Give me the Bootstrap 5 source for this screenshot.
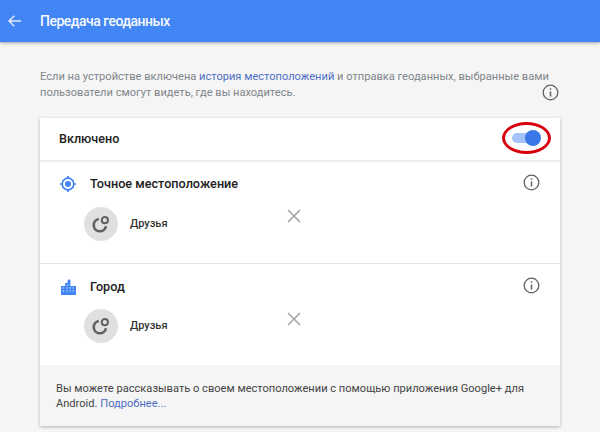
<!DOCTYPE html>
<html lang="ru">
<head>
  <meta charset="UTF-8" />
  <meta name="viewport" content="width=device-width, initial-scale=1.0" />
  <title>Передача геоданных</title>
  <link href="https://cdn.jsdelivr.net/npm/bootstrap@5.3.3/dist/css/bootstrap.min.css" rel="stylesheet">
  <style>
    body {
      background: #f5f5f5;
      font-family: Roboto, "Liberation Sans", sans-serif;
      font-size: 12px;
      overflow: hidden;
      height: 432px;
    }
    #top-bar {
      height: 42px;
      background: #4285f4;
      box-shadow: 0 1px 3px rgba(0, 0, 0, .35);
      color: #fff;
      padding-left: 7px;
    }
    #top-bar h1 {
      font-size: 14px;
      font-weight: 500;
      letter-spacing: -.5px;
      margin: 0 0 0 17px;
      color: #f4f8ff;
    }
    #intro {
      padding: 27px 40px 0;
      height: 76px;
      color: #80868b;
      font-size: 11.1px;
    }
    #intro .info-ico { margin: -1px 1px 0 auto; }
    .info-line { height: 16px; line-height: 16px; white-space: nowrap; }
    .blue-link { color: #4f6fc4; text-decoration: none; }
    #geo-card {
      width: 520px;
      margin: 0 40px;
      background: #fff;
      box-shadow: 0 1px 3px rgba(0, 0, 0, .28);
    }
    #on-row {
      height: 44px;
      padding: 0 8px 0 19px;
      border-bottom: 2px solid #eee;
    }
    #on-row span { font-size: 12.6px; font-weight: 500; color: #212121; }
    #toggle-wrap { position: relative; width: 50px; height: 34px; }
    #toggle-track {
      position: absolute; left: 10px; top: 11px;
      width: 26px; height: 10px;
      border-radius: 6px;
      background: #a3c2f9;
    }
    #toggle-knob {
      position: absolute; left: 23px; top: 8px;
      width: 16px; height: 16px;
      border-radius: 50%;
      background: #3b78e7;
    }
    #toggle-ring {
      position: absolute; left: 0; top: 0;
      width: 49px; height: 32px;
      border: 3px solid #d8000f;
      border-radius: 50%;
    }
    .geo-section { height: 102px; padding: 12px 20px 0 19px; border-bottom: 1px solid #e4e4e4; }
    .geo-section.last-one { height: 101px; padding-top: 13px; border-bottom: 0; }
    .geo-title { height: 20px; }
    .geo-title b { font-size: 12.65px; font-weight: 500; color: #212121; margin-left: 11px; }
    .geo-title .ms-auto { margin-top: -3px; }
    .geo-ico { width: 20px; height: 20px; flex: none; }
    .friend-row { margin: 13px 0 0 25px; height: 34px; }
    .last-one .friend-row { margin-top: 12px; }
    .friend-pic {
      width: 34px; height: 34px;
      border-radius: 50%;
      background: #e0e0e0;
      flex: none;
    }
    .friend-name { font-size: 11px; font-weight: 500; color: #333; margin-left: 12px; width: 150px; }
    .remove-ico { margin-top: -16px; margin-left: 7px; }
    .last-one .remove-ico { margin-top: -14px; }
    #foot-note {
      background: #f5f5f5;
      height: 61px;
      padding: 16px 15px 0 16px;
      font-size: 11.1px;
      line-height: 15px;
      color: #444;
    }
  </style>
</head>
<body>

  <!-- Header -->
  <div id="top-bar" class="d-flex align-items-center">
    <svg width="16" height="16" viewBox="0 0 24 24"><path d="M21 12H4M11 4l-8 8 8 8" fill="none" stroke="#e3edfd" stroke-width="2.2"/></svg>
    <h1>Передача геоданных</h1>
  </div>

  <!-- Intro -->
  <div id="intro">
    <div class="info-line">Если на устройстве включена <a href="#" class="blue-link">история местоположений</a> и отправка геоданных, выбранные вами</div>
    <div class="d-flex">
      <div class="info-line">пользователи смогут видеть, где вы находитесь.</div>
      <svg class="info-ico" width="17" height="17" viewBox="0 0 17 17"><circle cx="8.5" cy="8.5" r="7.3" fill="none" stroke="#616161" stroke-width="1.3"/><path d="M8.5 7.5v5M8.5 4.2v1.6" stroke="#616161" stroke-width="1.5"/></svg>
    </div>
  </div>

  <!-- Card -->
  <div id="geo-card">
    <div id="on-row" class="d-flex align-items-center justify-content-between">
      <span>Включено</span>
      <div id="toggle-wrap">
        <div id="toggle-track"></div>
        <div id="toggle-knob"></div>
        <div id="toggle-ring"></div>
      </div>
    </div>

    <div class="geo-section">
      <div class="geo-title d-flex align-items-center">
        <svg class="geo-ico" viewBox="0 0 20 20"><circle cx="9" cy="10" r="5.8" fill="none" stroke="#4285f4" stroke-width="1.7"/><circle cx="9" cy="10" r="3" fill="#4285f4"/><path d="M9 2v3M9 15v3M1 10h3M14 10h3" stroke="#4285f4" stroke-width="1.7"/></svg>
        <b>Точное местоположение</b>
        <svg class="ms-auto" width="17" height="17" viewBox="0 0 17 17"><circle cx="8.5" cy="8.5" r="7.3" fill="none" stroke="#616161" stroke-width="1.3"/><path d="M8.5 7.5v5M8.5 4.2v1.6" stroke="#616161" stroke-width="1.5"/></svg>
      </div>
      <div class="friend-row d-flex align-items-center">
        <div class="friend-pic d-flex align-items-center justify-content-center">
          <svg width="22" height="22" viewBox="0 0 20 20"><path d="M8 5.5a5.6 5.6 0 1 0 6.5 6.5" fill="none" stroke="#616161" stroke-width="2.4"/><circle cx="13.5" cy="6.5" r="2.8" fill="none" stroke="#616161" stroke-width="1.8"/></svg>
        </div>
        <div class="friend-name">Друзья</div>
        <svg class="remove-ico" width="14" height="14" viewBox="0 0 14 14"><path d="M1 1l12 12M13 1L1 13" stroke="#a6a6a6" stroke-width="1.6"/></svg>
      </div>
    </div>

    <div class="geo-section last-one">
      <div class="geo-title d-flex align-items-center">
        <svg class="geo-ico" viewBox="0 0 20 20"><path d="M2 18V9h4V6h2.5V3.5L10 2l1.5 1.5V9H17v9z" fill="#4285f4"/><path d="M3.5 11h1.5M3.5 14h1.5M7.5 8h1.5M10.5 8h1.5M7.5 11h1.5M10.5 11h1.5M13.5 11h1.5M7.5 14h1.5M10.5 14h1.5M13.5 14h1.5" stroke="#cfe0fd" stroke-width="1.2"/></svg>
        <b>Город</b>
        <svg class="ms-auto" width="17" height="17" viewBox="0 0 17 17"><circle cx="8.5" cy="8.5" r="7.3" fill="none" stroke="#616161" stroke-width="1.3"/><path d="M8.5 7.5v5M8.5 4.2v1.6" stroke="#616161" stroke-width="1.5"/></svg>
      </div>
      <div class="friend-row d-flex align-items-center">
        <div class="friend-pic d-flex align-items-center justify-content-center">
          <svg width="22" height="22" viewBox="0 0 20 20"><path d="M8 5.5a5.6 5.6 0 1 0 6.5 6.5" fill="none" stroke="#616161" stroke-width="2.4"/><circle cx="13.5" cy="6.5" r="2.8" fill="none" stroke="#616161" stroke-width="1.8"/></svg>
        </div>
        <div class="friend-name">Друзья</div>
        <svg class="remove-ico" width="14" height="14" viewBox="0 0 14 14"><path d="M1 1l12 12M13 1L1 13" stroke="#a6a6a6" stroke-width="1.6"/></svg>
      </div>
    </div>

    <div id="foot-note">
      Вы можете рассказывать о своем местоположении с помощью приложения Google+ для<br>
      Android. <a href="#" class="blue-link">Подробнее...</a>
    </div>
  </div>

  <script src="https://cdn.jsdelivr.net/npm/bootstrap@5.3.3/dist/js/bootstrap.bundle.min.js"></script>
</body>
</html>
